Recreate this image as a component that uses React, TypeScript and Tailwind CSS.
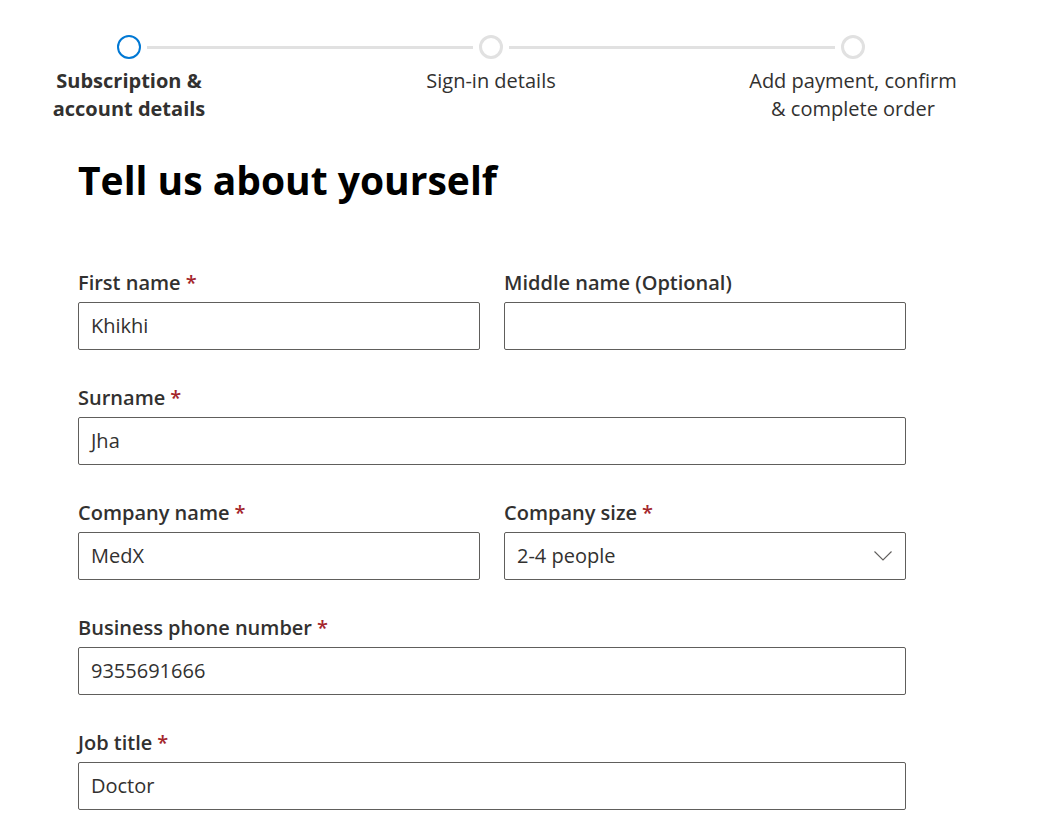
const font = { fontFamily: '"Open Sans", "Noto Sans", sans-serif' }

const Label = ({ text, required }: { text: string; required?: boolean }) => (
  <label className="block text-[20px] leading-[28px] font-semibold text-[#323130] mb-[5px]">
    {text}
    {required && <span className="text-[#a4262c] ml-[5px]">*</span>}
  </label>
)

const Field = ({ label, value, required }: { label: string; value?: string; required?: boolean }) => (
  <div className="flex-1">
    <Label text={label} required={required} />
    <div className="h-[48px] border border-[#605e5c] rounded-[2px] px-[12px] flex items-center text-[20px] text-[#323130]">
      {value}
    </div>
  </div>
)

const Step = ({ lines, bold }: { lines: string[]; bold?: boolean }) => (
  <div className={`w-[200px] flex flex-col items-center whitespace-nowrap ${bold ? 'font-bold' : ''}`}>
    {lines.map((l) => (
      <span key={l}>{l}</span>
    ))}
  </div>
)

const App = () => {
  return (
    <div className="bg-white min-h-screen" style={font}>
      <div className="pt-[35px]">
        <div className="ml-[117px] w-[748px] flex items-center">
          <div className="w-[24px] h-[24px] rounded-full border-2 border-[#0078d4]" />
          <div className="flex-1 h-[3px] bg-[#e1e1e1] mx-[6px]" />
          <div className="w-[24px] h-[24px] rounded-full border-[3px] border-[#e1e1e1]" />
          <div className="flex-1 h-[3px] bg-[#e1e1e1] mx-[6px]" />
          <div className="w-[24px] h-[24px] rounded-full border-[3px] border-[#e1e1e1]" />
        </div>
        <div className="ml-[29px] w-[924px] flex justify-between mt-[8px] text-[20px] leading-[28px] text-[#323130]">
          <Step lines={['Subscription &', 'account details']} bold />
          <Step lines={['Sign-in details']} />
          <Step lines={['Add payment, confirm', '& complete order']} />
        </div>
      </div>

      <div className="ml-[78px] w-[828px]">
        <h1 className="mt-[29px] text-[39px] leading-[56px] font-bold text-black">Tell us about yourself</h1>

        <div className="mt-[61px] flex flex-col gap-[34px]">
          <div className="flex gap-[24px]">
            <Field label="First name" value="Khikhi" required />
            <Field label="Middle name (Optional)" />
          </div>
          <Field label="Surname" value="Jha" required />
          <div className="flex gap-[24px]">
            <Field label="Company name" value="MedX" required />
            <div className="flex-1">
              <Label text="Company size" required />
              <div className="h-[48px] border border-[#605e5c] rounded-[2px] pl-[12px] pr-[13px] flex items-center justify-between text-[20px] text-[#323130]">
                <span>2-4 people</span>
                <svg width="18" height="10" viewBox="0 0 18 10" fill="none" className="text-[#605e5c]">
                  <path d="M0.5 0.5 L9 9 L17.5 0.5" stroke="currentColor" strokeWidth="1.1" />
                </svg>
              </div>
            </div>
          </div>
          <Field label="Business phone number" value="9355691666" required />
          <Field label="Job title" value="Doctor" required />
        </div>
      </div>
    </div>
  )
}

export default App
